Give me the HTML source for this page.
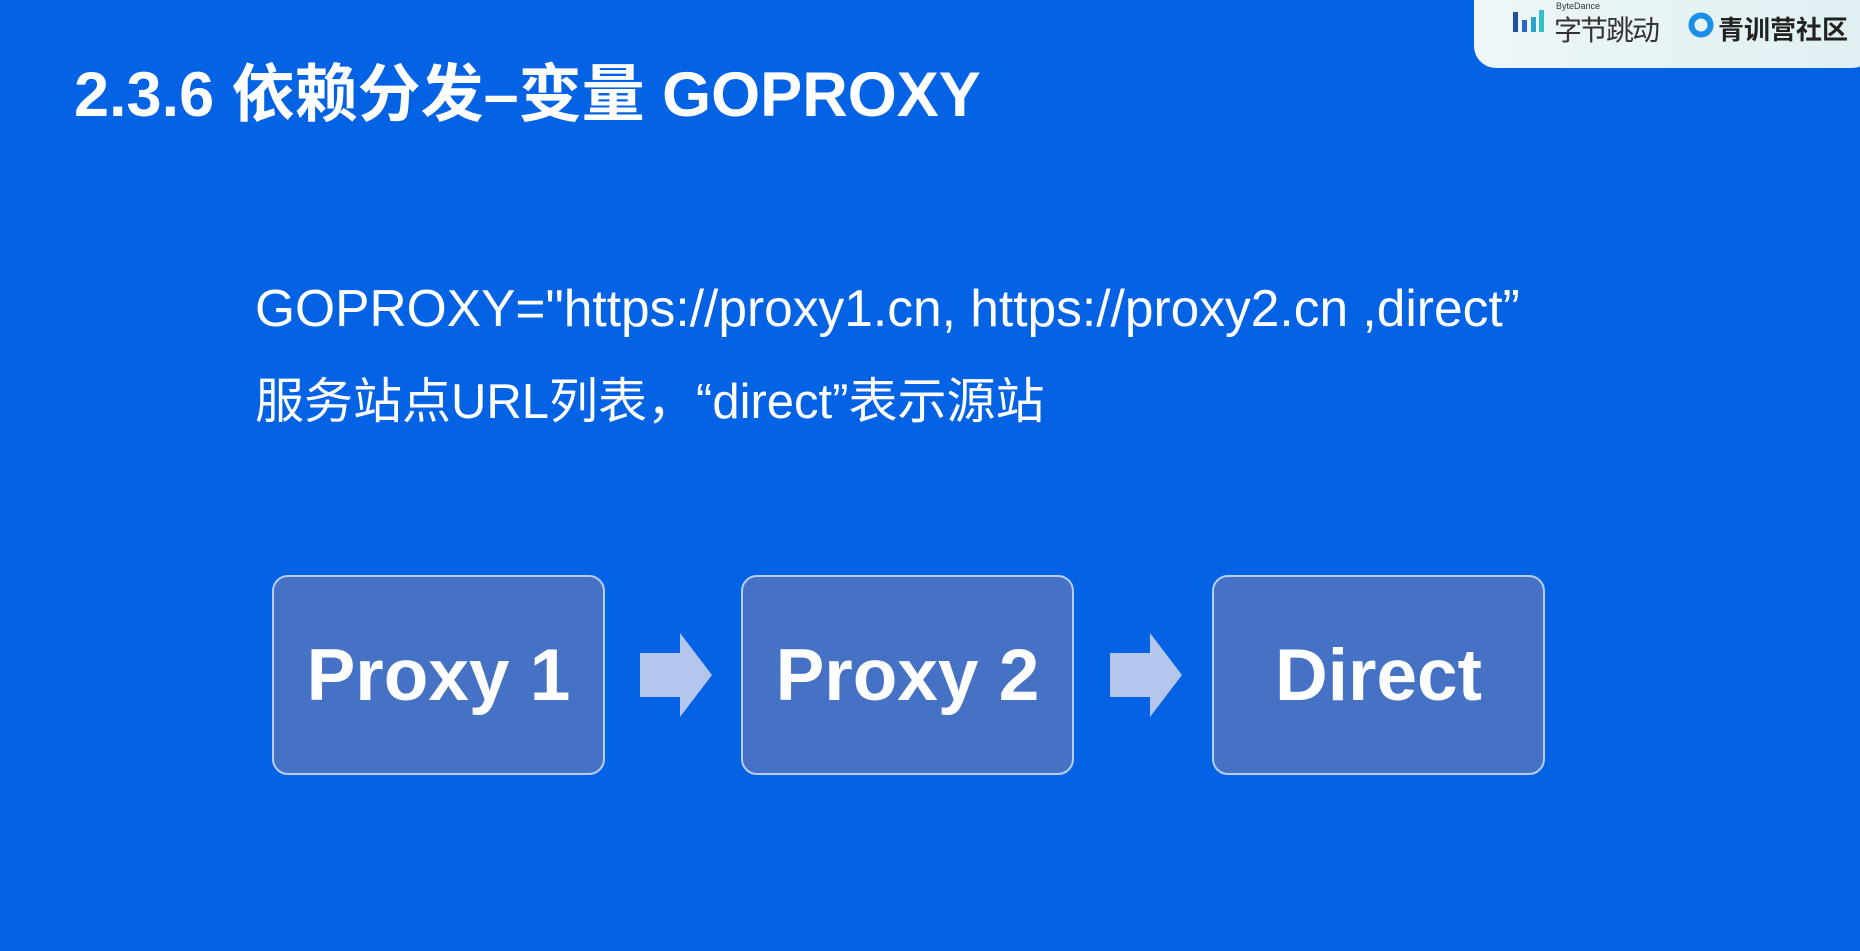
<!DOCTYPE html>
<html><head><meta charset="utf-8"><style>
html,body{margin:0;padding:0}
body{width:1860px;height:951px;background:#0462e4;position:relative;overflow:hidden;font-family:"Liberation Sans","Noto Sans CJK SC",sans-serif;color:#fff}
.hdr{position:absolute;left:1474px;top:-20px;width:400px;height:88px;background:linear-gradient(90deg,#eef6f8,#dff0f2);border-radius:22px}
.t{position:absolute;left:74px;top:44px;font-size:63px;font-weight:bold;white-space:nowrap}
.l{position:absolute;left:255px;font-size:49px;white-space:nowrap}
.box{position:absolute;top:575px;width:333px;height:200px;border:2px solid #b9cdf0;border-radius:16px;background:#4672c6;display:flex;align-items:center;justify-content:center;font-size:73px;font-weight:bold;box-sizing:border-box}
.ar{position:absolute;top:633px}
</style></head><body>
<div class="hdr"></div>
<svg style="position:absolute;left:1513px;top:10px" width="32" height="26"><rect x="0" y="2" width="5" height="20" fill="#1f4fa0"/><rect x="9" y="10" width="5" height="12" fill="#2b66c2"/><rect x="18" y="7" width="5" height="15" fill="#2aa5c8"/><rect x="26" y="0" width="5" height="22" fill="#35c1c9"/></svg>
<div style="position:absolute;left:1556px;top:1px;font-size:9px;color:#333">ByteDance</div>
<div style="position:absolute;left:1554px;top:9px;font-size:28px;color:#333;letter-spacing:-2px">字节跳动</div>
<svg style="position:absolute;left:1688px;top:12px" width="26" height="26"><circle cx="13" cy="13" r="9.5" fill="none" stroke="#1a8fe8" stroke-width="6"/></svg>
<div style="position:absolute;left:1718px;top:10px;font-size:26px;color:#222;font-weight:bold">青训营社区</div>
<div class="t">2.3.6 依赖分发–变量 GOPROXY</div>
<div class="l" style="top:278px;font-size:51.5px">GOPROXY="https://proxy1.cn, https://proxy2.cn ,direct”</div>
<div class="l" style="top:362px">服务站点URL列表，“direct”表示源站</div>
<div class="box" style="left:272px">Proxy 1</div>
<div class="box" style="left:741px">Proxy 2</div>
<div class="box" style="left:1212px">Direct</div>
<svg class="ar" style="left:640px" width="74" height="84"><polygon points="0,20 40,20 40,0 72,42 40,84 40,64 0,64" fill="#b4c6ec"/></svg>
<svg class="ar" style="left:1110px" width="74" height="84"><polygon points="0,20 40,20 40,0 72,42 40,84 40,64 0,64" fill="#b4c6ec"/></svg>
</body></html>
